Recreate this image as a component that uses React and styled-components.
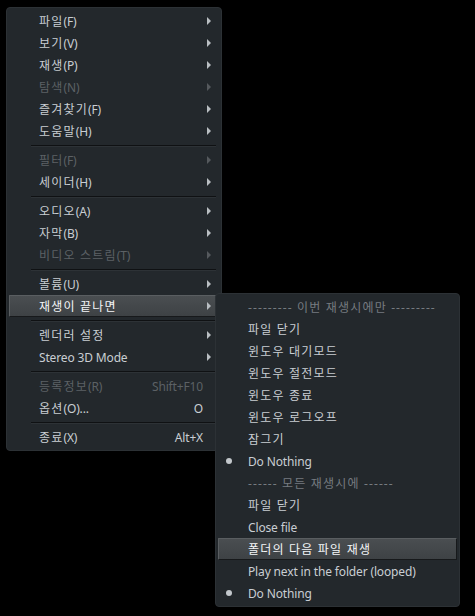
import React from 'react';
import styled, { createGlobalStyle } from 'styled-components';

const GlobalStyle = createGlobalStyle`
  html, body {
    margin: 0;
    background: #000;
  }
  body {
    font-family: "Noto Sans", "Noto Sans CJK KR", sans-serif;
    font-size: 12px;
    letter-spacing: -0.15px;
  }
`;

const Page = styled.div`
  width: 475px;
  height: 616px;
  padding: 7px 0 0 6px;
  box-sizing: border-box;
`;

const Menu = styled.div`
  width: ${(p) => p.$width}px;
  box-sizing: border-box;
  padding: 2px;
  background: #23282c;
  border: 1px solid #2c3135;
  border-radius: 4px;
  display: flex;
  flex-direction: column;
`;

const SubMenu = styled(Menu)`
  position: absolute;
  top: -3px;
  left: calc(100% - 3px);
  z-index: 2;
`;

const Item = styled.div`
  position: relative;
  height: 22px;
  box-sizing: border-box;
  display: flex;
  align-items: center;
  padding-left: 29px;
  color: ${(p) => (p.$disabled ? '#5c6165' : p.$header ? '#767b80' : p.$active ? '#f4f6f8' : '#c9ced3')};
  white-space: nowrap;
  border: 1px solid transparent;
  border-radius: 1px;
  ${(p) =>
    p.$active &&
    `
    background: linear-gradient(#4a4e51, #3e4245);
    border-color: #5a5e61 #17191b #17191b #5a5e61;
  `}
`;

const Label = styled.span`
  flex: 1;
`;

// hangul runs are set a little wider, like the original UI font
const Hangul = styled.span`
  letter-spacing: 1.2px;
`;

const Dashes = styled.span`
  letter-spacing: 1.1px;
`;

const Shortcut = styled.span`
  margin-right: 1px;
`;

const ArrowSlot = styled.span`
  width: 11px;
  flex: none;
  display: flex;
  align-items: center;
  padding-left: 3px;
`;

const Arrow = styled.span`
  width: 0;
  height: 0;
  border-top: 4px solid transparent;
  border-bottom: 4px solid transparent;
  border-left: 4px solid ${(p) => (p.$disabled ? '#55595d' : '#b9bec2')};
`;

const Bullet = styled.span`
  position: absolute;
  left: 7px;
  top: 7px;
  width: 6px;
  height: 6px;
  border-radius: 50%;
  background: #c3c8cc;
`;

const Separator = styled.div`
  height: 7px;
  display: flex;
  flex-direction: column;
  justify-content: center;
  margin: 0 3px 0 22px;
  &::before {
    content: '';
    height: 1px;
    background: #0f1113;
  }
  &::after {
    content: '';
    height: 1px;
    background: #2d3236;
  }
`;

const mainItems = [
  { label: '파일(F)', sub: true },
  { label: '보기(V)', sub: true },
  { label: '재생(P)', sub: true },
  { label: '탐색(N)', sub: true, disabled: true },
  { label: '즐겨찾기(F)', sub: true },
  { label: '도움말(H)', sub: true },
  'sep',
  { label: '필터(F)', sub: true, disabled: true },
  { label: '세이더(H)', sub: true },
  'sep',
  { label: '오디오(A)', sub: true },
  { label: '자막(B)', sub: true },
  { label: '비디오 스트림(T)', sub: true, disabled: true },
  'sep',
  { label: '볼륨(U)', sub: true },
  { label: '재생이 끝나면', sub: true, active: true, open: true },
  'sep',
  { label: '렌더러 설정', sub: true },
  { label: 'Stereo 3D Mode', sub: true },
  'sep',
  { label: '등록정보(R)', shortcut: 'Shift+F10', disabled: true },
  { label: '옵션(O)...', shortcut: 'O' },
  'sep',
  { label: '종료(X)', shortcut: 'Alt+X' },
];

const subItems = [
  { label: '--------- 이번 재생시에만 ---------', header: true },
  { label: '파일 닫기' },
  { label: '윈도우 대기모드' },
  { label: '윈도우 절전모드' },
  { label: '윈도우 종료' },
  { label: '윈도우 로그오프' },
  { label: '잠그기' },
  { label: 'Do Nothing', checked: true },
  { label: '------ 모든 재생시에 ------', header: true },
  { label: '파일 닫기' },
  { label: 'Close file' },
  { label: '폴더의 다음 파일 재생', active: true },
  { label: 'Play next in the folder (looped)' },
  { label: 'Do Nothing', checked: true },
];

const Text = ({ children }) =>
  children
    .split(/([\uac00-\ud7a3][\uac00-\ud7a3 ]*[\uac00-\ud7a3]|[\uac00-\ud7a3]|-+ ?| -+)/)
    .map((part, i) => {
      if (!(i % 2)) return part;
      return part.includes('-') ? <Dashes key={i}>{part}</Dashes> : <Hangul key={i}>{part}</Hangul>;
    });

const SubMenuList = () => (
  <SubMenu $width={245}>
    {subItems.map((it, i) => (
      <Item key={i} $header={it.header} $active={it.active}>
        {it.checked && <Bullet />}
        <Label>
          <Text>{it.label}</Text>
        </Label>
      </Item>
    ))}
  </SubMenu>
);

const App = () => {
  return (
    <Page>
      <GlobalStyle />
      <Menu $width={216}>
        {mainItems.map((it, i) =>
          it === 'sep' ? (
            <Separator key={i} />
          ) : (
            <Item key={i} $disabled={it.disabled} $active={it.active}>
              <Label>
                <Text>{it.label}</Text>
              </Label>
              {it.shortcut && <Shortcut>{it.shortcut}</Shortcut>}
              <ArrowSlot>{it.sub && <Arrow $disabled={it.disabled} />}</ArrowSlot>
              {it.open && <SubMenuList />}
            </Item>
          )
        )}
      </Menu>
    </Page>
  );
};

export default App;
